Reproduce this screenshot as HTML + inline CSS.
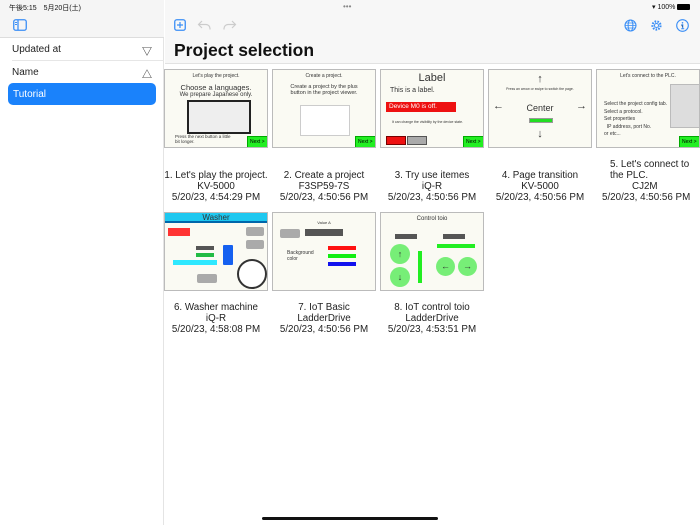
<!DOCTYPE html>
<html><head><meta charset="utf-8"><style>
*{box-sizing:border-box;margin:0;padding:0}
body{width:700px;height:525px;position:relative;overflow:hidden;background:#fff;font-family:"Liberation Sans","Noto Sans CJK JP",sans-serif;color:#111}
.abs{position:absolute}
.side{left:0;top:0;width:164px;height:525px;background:#fff;border-right:1px solid #e4e4e4}
.sidehead{left:0;top:0;width:164px;height:38px;background:#f5f5f5;border-bottom:1px solid #ddd}
.mainhead{left:165px;top:0;width:535px;height:64px;background:#f7f7f7;border-bottom:1px solid #e2e2e2}
.row{left:12px;width:152px;font-size:10px;color:#222}
.th{position:absolute;width:104px;height:79px;border:1px solid #bbb;background:#fafaf3;overflow:hidden;font-size:5px;color:#333;text-align:center}
.cap{position:absolute;width:110px;text-align:center;font-size:9.8px;line-height:11px;color:#222;white-space:nowrap}
.btn{position:absolute;background:#22ee22;border:1px solid #0a0;font-size:5px;color:#000;padding:2px 2px;white-space:nowrap}
</style></head><body>
<div class="abs side"></div>
<div class="abs sidehead"></div>
<div class="abs mainhead"></div>
<div class="abs" style="left:9px;top:3px;font-size:7px">午後5:15　5月20日(土)</div>
<div class="abs" style="left:343px;top:2px;font-size:8px;color:#888">•••</div>
<div class="abs" style="left:652px;top:3px;font-size:7px">▾ 100% <span style="display:inline-block;width:13px;height:6px;background:#000;border-radius:1px;vertical-align:middle"></span></div>
<svg class="abs" style="left:13px;top:19px" width="14" height="12"><rect x="0.75" y="0.75" width="12.5" height="10.5" rx="2" fill="none" stroke="#3a8ef6" stroke-width="1.3"/><line x1="5" y1="1" x2="5" y2="11" stroke="#3a8ef6" stroke-width="1.3"/><line x1="2" y1="3.5" x2="4" y2="3.5" stroke="#3a8ef6"/><line x1="2" y1="5.5" x2="4" y2="5.5" stroke="#3a8ef6"/></svg>
<div class="abs row" style="top:44px">Updated at</div>
<div class="abs" style="left:142px;top:43px;font-size:10px">▽</div>
<div class="abs" style="left:12px;top:60px;width:152px;height:1px;background:#e6e6e6"></div>
<div class="abs row" style="top:67px">Name</div>
<div class="abs" style="left:142px;top:66px;font-size:10px">△</div>
<div class="abs" style="left:8px;top:83px;width:148px;height:22px;background:#1a82fb;border-radius:5px;color:#fff;font-size:10px;padding:6px 5px">Tutorial</div>
<svg class="abs" style="left:174px;top:19px" width="12" height="12"><rect x="0.75" y="0.75" width="10.5" height="10.5" rx="2" fill="none" stroke="#3a8ef6" stroke-width="1.3"/><path d="M6 3v6M3 6h6" stroke="#3a8ef6" stroke-width="1.2"/></svg>
<svg class="abs" style="left:197px;top:19px" width="14" height="12"><path d="M5 2L1.5 5.5 5 9M1.5 5.5H9a4 4 0 0 1 4 4v1" fill="none" stroke="#ccc" stroke-width="1.2"/></svg>
<svg class="abs" style="left:223px;top:19px" width="14" height="12"><path d="M9 2l3.5 3.5L9 9M12.5 5.5H5a4 4 0 0 0-4 4v1" fill="none" stroke="#ccc" stroke-width="1.2"/></svg>
<svg class="abs" style="left:624px;top:19px" width="13" height="13"><circle cx="6.5" cy="6.5" r="5.5" fill="none" stroke="#3a8ef6" stroke-width="1.1"/><ellipse cx="6.5" cy="6.5" rx="2.4" ry="5.5" fill="none" stroke="#3a8ef6"/><path d="M1 6.5h11M2 4h9M2 9h9" stroke="#3a8ef6" stroke-width=".8"/></svg>
<svg class="abs" style="left:650px;top:19px" width="13" height="13"><circle cx="6.5" cy="6.5" r="4" fill="none" stroke="#3a8ef6" stroke-width="2.2" stroke-dasharray="1.6 1.2"/><circle cx="6.5" cy="6.5" r="2" fill="none" stroke="#3a8ef6" stroke-width="1"/></svg>
<svg class="abs" style="left:676px;top:19px" width="13" height="13"><circle cx="6.5" cy="6.5" r="5.8" fill="none" stroke="#3a8ef6" stroke-width="1.1"/><circle cx="6.5" cy="3.8" r=".8" fill="#3a8ef6"/><path d="M5.3 5.8h1.5v4M5.2 9.8h3" stroke="#3a8ef6" stroke-width="1"/></svg>
<div class="abs" style="left:174px;top:40px;font-size:17.5px;font-weight:bold;color:#111">Project selection</div>

<div class="th" style="left:164px;top:69px">
<div style="margin-top:3px">Let's play the project.</div>
<div style="font-size:7.5px;margin-top:4px">Choose a languages.</div>
<div style="font-size:6px">We prepare Japanese only.</div>
<div style="position:absolute;left:22px;top:30px;width:64px;height:34px;border:2px solid #222;background:#eee"></div>
<div style="position:absolute;left:10px;top:64px;text-align:left;font-size:4.5px">Press the next button a little<br>bit longer.</div>
<div class="btn" style="left:82px;top:66px">Next &gt;</div></div>
<div class="th" style="left:272px;top:69px">
<div style="margin-top:3px">Create a project.</div>
<div style="margin-top:5px;font-size:5.5px">Create a project by the plus<br>button in the project viewer.</div>
<div style="position:absolute;left:27px;top:35px;width:50px;height:31px;border:1px solid #ccc;background:#fff"></div>
<div class="btn" style="left:82px;top:66px">Next &gt;</div></div>
<div class="th" style="left:380px;top:69px;text-align:left">
<div style="text-align:center;font-size:11px;margin-top:2px">Label</div>
<div style="font-size:7px;margin:3px 0 0 9px">This is a label.</div>
<div style="position:absolute;left:5px;top:32px;width:70px;height:10px;background:#ee1111;color:#fff;font-size:6.5px;padding:1px 3px">Device M0 is off.</div>
<div style="position:absolute;left:11px;top:50px;font-size:3.5px">It can change the visibility by the device state.</div>
<div style="position:absolute;left:5px;top:66px;width:20px;height:9px;background:#e11;border:1px solid #700"></div>
<div style="position:absolute;left:26px;top:66px;width:20px;height:9px;background:#aaa;border:1px solid #555"></div>
<div class="btn" style="left:82px;top:66px">Next &gt;</div></div>
<div class="th" style="left:488px;top:69px">
<div style="font-size:11px;margin-top:3px">↑</div>
<div style="font-size:3.5px;margin-top:2px">Press an arrow or swipe to switch the page.</div>
<div style="position:absolute;left:4px;top:30px;font-size:11px">←</div>
<div style="position:absolute;right:4px;top:30px;font-size:11px">→</div>
<div style="position:absolute;left:0;width:100%;top:33px;font-size:9px">Center</div>
<div style="position:absolute;left:40px;top:48px;width:24px;height:5px;background:#2d2;border:1px solid #999"></div>
<div style="position:absolute;left:0;width:100%;top:58px;font-size:11px">↓</div></div>
<div class="th" style="left:596px;top:69px;text-align:left">
<div style="text-align:center;margin-top:3px">Let's connect to the PLC.</div>
<div style="position:absolute;left:7px;top:31px;font-size:5px;line-height:7.5px">Select the project config tab.<br>Select a protocol.<br>Set properties<br>&nbsp;&nbsp;IP address, port No.<br>or etc...</div>
<div style="position:absolute;left:73px;top:14px;width:30px;height:44px;background:#ddd;border:1px solid #bbb"></div>
<div class="btn" style="left:82px;top:66px">Next &gt;</div></div>
<div class="cap" style="left:161px;top:170px">1. Let's play the project.<br>KV-5000<br>5/20/23, 4:54:29 PM</div>
<div class="cap" style="left:269px;top:170px">2. Create a project<br>F3SP59-7S<br>5/20/23, 4:50:56 PM</div>
<div class="cap" style="left:377px;top:170px">3. Try use itemes<br>iQ-R<br>5/20/23, 4:50:56 PM</div>
<div class="cap" style="left:485px;top:170px">4. Page transition<br>KV-5000<br>5/20/23, 4:50:56 PM</div>
<div class="cap" style="left:593px;top:159px;text-align:left;padding-left:17px">5. Let's connect to<br>the PLC.<br><span style="padding-left:22px">CJ2M</span><br><span style="margin-left:-8px">5/20/23, 4:50:56 PM</span></div>

<div class="th" style="left:164px;top:212px">
<div style="background:#1ec8f0;border-bottom:2px solid #06a;height:10px;font-size:8px;line-height:10px">Washer</div>
<div style="position:absolute;left:3px;top:15px;width:22px;height:8px;background:#f33"></div>
<div style="position:absolute;left:81px;top:14px;width:18px;height:9px;background:#aaa;border-radius:2px"></div>
<div style="position:absolute;left:81px;top:27px;width:18px;height:9px;background:#aaa;border-radius:2px"></div>
<div style="position:absolute;left:31px;top:33px;width:18px;height:4px;background:#555"></div>
<div style="position:absolute;left:31px;top:40px;width:18px;height:4px;background:#2b4"></div>
<div style="position:absolute;left:58px;top:32px;width:10px;height:20px;background:#1560f0;border-radius:1px"></div>
<div style="position:absolute;left:8px;top:47px;width:44px;height:5px;background:#2ee8ff"></div>
<div style="position:absolute;left:32px;top:61px;width:20px;height:9px;background:#aaa;border-radius:2px"></div>
<div style="position:absolute;left:72px;top:46px;width:30px;height:30px;border:2px solid #333;border-radius:50%;background:#fff"></div></div>
<div class="th" style="left:272px;top:212px">
<div style="margin-top:7px;font-size:4px">Value A</div>
<div style="position:absolute;left:7px;top:16px;width:20px;height:9px;background:#aaa;border-radius:2px"></div>
<div style="position:absolute;left:32px;top:16px;width:38px;height:7px;background:#555"></div>
<div style="position:absolute;left:14px;top:37px;text-align:left;font-size:5px">Background<br>color</div>
<div style="position:absolute;left:55px;top:33px;width:28px;height:4px;background:#f11"></div>
<div style="position:absolute;left:55px;top:41px;width:28px;height:4px;background:#1e1"></div>
<div style="position:absolute;left:55px;top:49px;width:28px;height:4px;background:#11e"></div></div>
<div class="th" style="left:380px;top:212px">
<div style="font-size:6px;margin-top:3px">Control toio</div>
<div style="position:absolute;left:14px;top:21px;width:22px;height:5px;background:#555"></div>
<div style="position:absolute;left:62px;top:21px;width:22px;height:5px;background:#555"></div>
<div style="position:absolute;left:9px;top:31px;width:20px;height:20px;border-radius:50%;background:#7e7;font-size:9px;line-height:20px">↑</div>
<div style="position:absolute;left:9px;top:54px;width:20px;height:20px;border-radius:50%;background:#7e7;font-size:9px;line-height:20px">↓</div>
<div style="position:absolute;left:37px;top:38px;width:4px;height:32px;background:#2e2"></div>
<div style="position:absolute;left:56px;top:31px;width:38px;height:4px;background:#2e2"></div>
<div style="position:absolute;left:55px;top:44px;width:19px;height:19px;border-radius:50%;background:#7e7;font-size:9px;line-height:19px">←</div>
<div style="position:absolute;left:77px;top:44px;width:19px;height:19px;border-radius:50%;background:#7e7;font-size:9px;line-height:19px">→</div></div>
<div class="cap" style="left:161px;top:302px">6. Washer machine<br>iQ-R<br>5/20/23, 4:58:08 PM</div>
<div class="cap" style="left:269px;top:302px">7. IoT Basic<br>LadderDrive<br>5/20/23, 4:50:56 PM</div>
<div class="cap" style="left:377px;top:302px">8. IoT control toio<br>LadderDrive<br>5/20/23, 4:53:51 PM</div>
<div class="abs" style="left:262px;top:517px;width:176px;height:3px;border-radius:2px;background:#111"></div>
</body></html>
